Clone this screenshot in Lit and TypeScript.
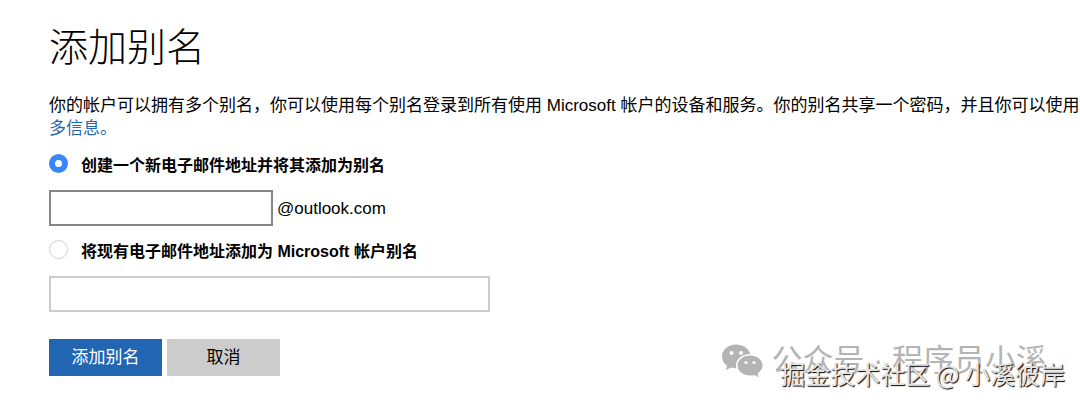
import { LitElement, html, css } from "lit";
import { customElement, state } from "lit/decorators.js";

@customElement("app-root")
export class AppRoot extends LitElement {
  static styles = css`
    :host {
      display: block;
      position: relative;
      min-height: 100vh;
      box-sizing: border-box;
      overflow: hidden;
      background: #fff;
      color: #000;
      font: 17px/23px "Liberation Sans", "Noto Sans CJK SC", sans-serif;
    }
    main {
      padding: 17px 0 28px 49px;
    }
    h1 {
      margin: 0 0 23px;
      font-size: 39px;
      line-height: 54px;
      font-weight: 300;
      font-family: "Noto Sans CJK SC", sans-serif;
    }
    .intro {
      margin: 0 0 13px;
      white-space: nowrap;
    }
    a {
      color: #1f66b5;
      text-decoration: none;
    }
    .option {
      display: flex;
      align-items: center;
      gap: 13px;
      height: 24px;
      font-size: 16px;
      font-weight: 700;
    }
    .option input {
      appearance: none;
      flex: none;
      box-sizing: border-box;
      width: 19px;
      height: 19px;
      margin: 0 0 4px;
      border: 1px solid #d0d0d0;
      border-radius: 50%;
      background: #fff;
    }
    .option input:checked {
      border: 6px solid #3a86f6;
    }
    .field {
      display: flex;
      align-items: center;
      gap: 4px;
      margin: 13px 0;
    }
    .field input {
      box-sizing: border-box;
      height: 36px;
      padding: 4px 8px;
      border: 2px solid #ccc;
      border-radius: 0;
      background: #fff;
      font: inherit;
      outline: none;
    }
    .field .name {
      width: 224px;
      border-color: #868686;
    }
    .field .email {
      width: 441px;
    }
    .actions {
      display: flex;
      gap: 5px;
      margin-top: 27px;
    }
    button {
      width: 113px;
      height: 37px;
      padding: 0;
      border: 0;
      background: #ccc;
      color: #000;
      font: inherit;
    }
    .primary {
      background: #2266b3;
      color: #fff;
    }
    .account,
    .credit {
      position: absolute;
      display: flex;
      align-items: center;
      white-space: nowrap;
      pointer-events: none;
    }
    .account {
      right: 33px;
      bottom: 21px;
      gap: 8px;
      color: #b4b4b4;
      font-size: 31px;
      line-height: 44px;
    }
    .account svg {
      width: 42px;
      height: 36px;
    }
    .credit {
      right: 15px;
      bottom: 13px;
      color: #e4e4e4;
      font-family: "Noto Sans CJK SC", sans-serif;
      font-size: 25px;
      line-height: 36px;
      text-shadow: 1px 1px 1px #000;
    }
  `;

  @state() private mode: "new" | "existing" = "new";

  render() {
    return html`
      <main>
        <h1>添加别名</h1>
        <p class="intro">
          你的帐户可以拥有多个别名，你可以使用每个别名登录到所有使用 Microsoft
          帐户的设备和服务。你的别名共享一个密码，并且你可以使用每个别名登录。<br />
          <a href="#more">多信息。</a>
        </p>
        <form @submit=${(e: Event) => e.preventDefault()}>
          <label class="option">
            <input
              type="radio"
              name="mode"
              .checked=${this.mode === "new"}
              @change=${() => (this.mode = "new")}
            />
            <span>创建一个新电子邮件地址并将其添加为别名</span>
          </label>
          <div class="field">
            <input class="name" id="name" type="text" aria-label="创建一个新电子邮件地址" />
            <label for="name">@outlook.com</label>
          </div>
          <label class="option">
            <input
              type="radio"
              name="mode"
              .checked=${this.mode === "existing"}
              @change=${() => (this.mode = "existing")}
            />
            <span>将现有电子邮件地址添加为 Microsoft 帐户别名</span>
          </label>
          <div class="field">
            <input class="email" type="email" aria-label="现有电子邮件地址" />
          </div>
          <div class="actions">
            <button class="primary" type="submit">添加别名</button>
            <button type="button">取消</button>
          </div>
        </form>
      </main>
      <div class="account">
        <svg viewBox="0 0 42 36" aria-hidden="true">
          <path
            fill="#b4b4b4"
            d="M15 1.500C7 1.500 1 6.700 1 13.500c0 4 2 7 5 9.200l-1.200 4.600 5-2.800c1.700.5 3.400.8 5.200.8v-2.500C15 16 21 11 29.300 11C27.500 5.300 22 1.500 15 1.500Z"
          />
          <path
            fill="#b4b4b4"
            d="M29 12.500c-7 0-12.500 4.500-12.500 10S22 32.500 29 32.500c1.500 0 3-.2 4.300-.6l4.400 2.400-1.200-3.900c3-1.900 5-4.600 5-7.900C41.500 17 36 12.500 29 12.500Z"
          />
          <g fill="#fff">
            <circle cx="10.500" cy="10" r="2" />
            <circle cx="20" cy="10" r="2" />
            <circle cx="25" cy="19.500" r="1.600" />
            <circle cx="33" cy="19.500" r="1.600" />
          </g>
        </svg>
        <span>公众号 · 程序员小溪</span>
      </div>
      <div class="credit">掘金技术社区 @ 小溪彼岸</div>
    `;
  }
}
